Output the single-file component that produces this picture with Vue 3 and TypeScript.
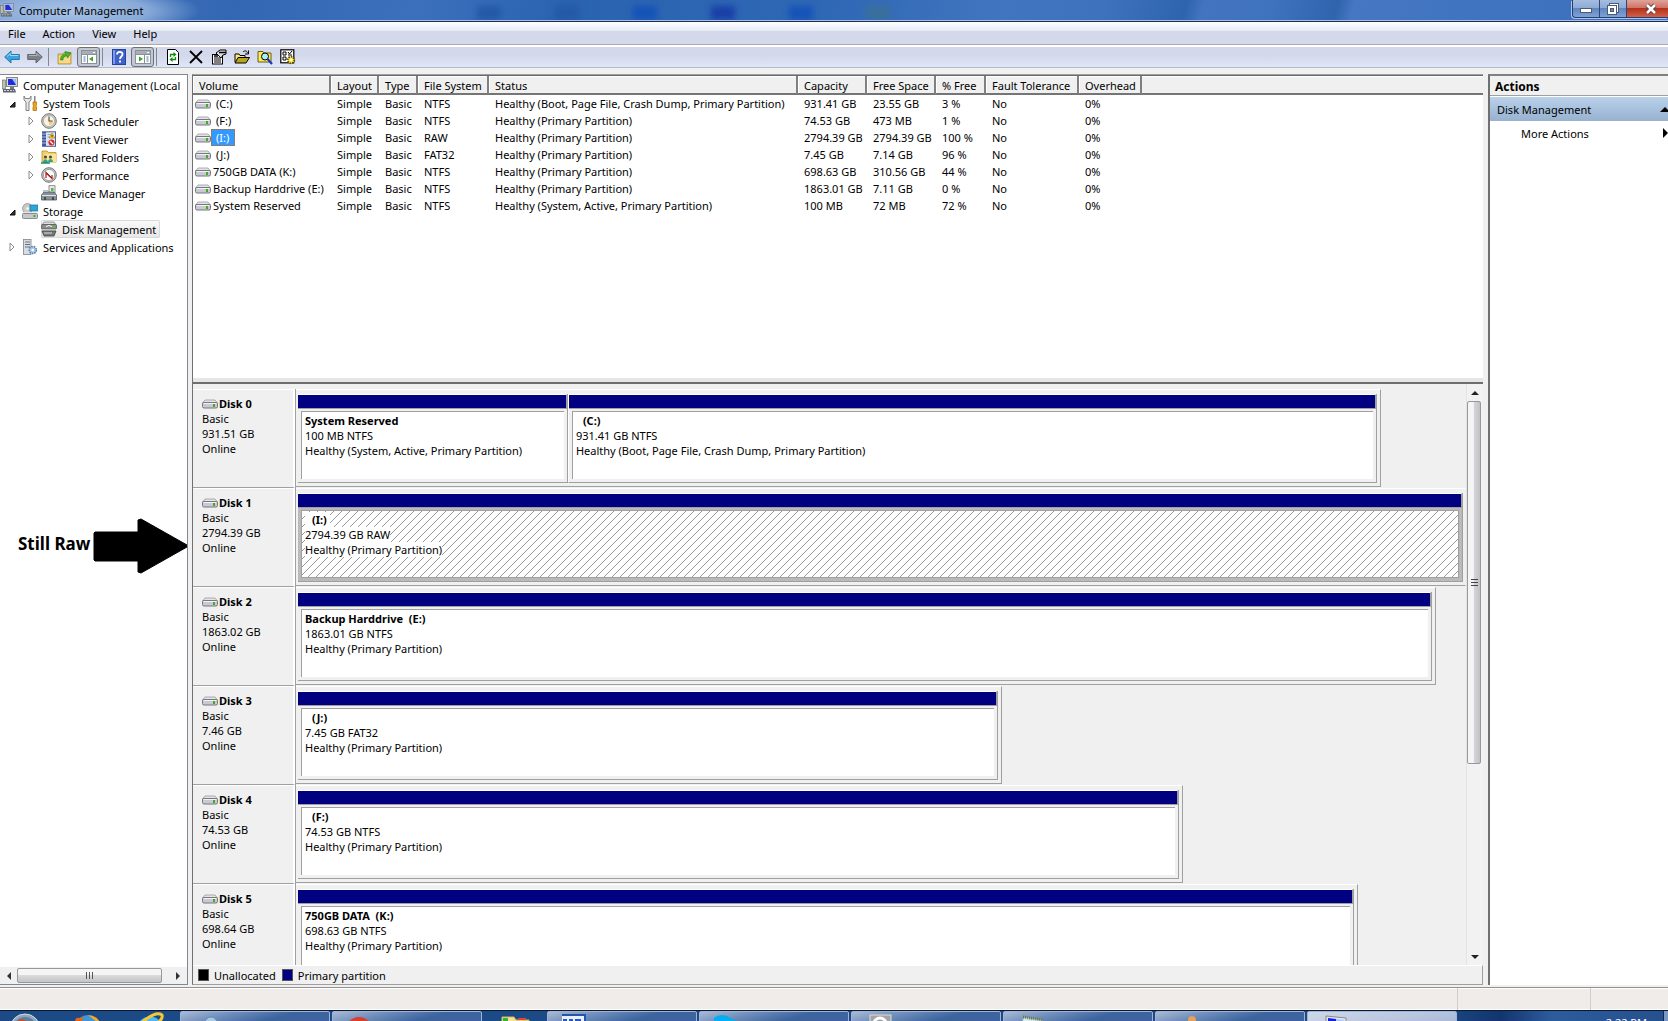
<script setup lang="ts">
interface Volume {
  name: string
  unnamed?: boolean
  selected?: boolean
  cells: string[]
}
interface Partition {
  name: string
  unnamed?: boolean
  info: string
  status: string
  share: number
  selected?: boolean
}
interface Disk {
  name: string
  size: string
  width: number
  partitions: Partition[]
}
interface TreeNode {
  label: string
  icon: string
  level: number
  arrow?: 'open' | 'closed'
  current?: boolean
}

const icons: Record<string, string> = {
  drive:
    '<path d="M3 4h10l2.500 3H.5z" fill="#e4e4e8" stroke="#9a9aa0" stroke-width=".8"/><rect x=".5" y="6.500" width="15" height="5.500" rx="1.500" fill="#c9c9d2" stroke="#77777f"/><path d="M1.500 7.500h13" stroke="#f4f4f8"/><rect x="11" y="8" width="2" height="3" fill="#3fae1e"/>',
  computer:
    '<rect x="4.500" y=".5" width="11" height="9" fill="#d8d8d8" stroke="#888"/><rect x="6" y="2" width="8" height="6" fill="#1c2fd8"/><path d="M10 2h4v6z" fill="#9db8ff"/><path d="M8 10h4v2H8z" fill="#777"/><rect x=".5" y="3" width="3" height="9" fill="#b9c4ae" stroke="#777" stroke-width=".7"/><path d="M1 12h12l1 3.500H1z" fill="#5d6670"/><path d="M2 13.500h10" stroke="#cfd6dc" stroke-dasharray="2 1"/>',
  tools:
    '<path d="M2 1v4l2 2v8.500h3V7l2-2V1L7.500 3.500h-4z" fill="#e6e6e6" stroke="#777" stroke-width=".9"/><path d="M12 1h1.500v6H12z" fill="#888"/><path d="M11 7h3.500v3l-.7 1 .7 1v3.500H11V12l.7-1-.7-1z" fill="#f0a31c" stroke="#a86a06" stroke-width=".7"/>',
  clock:
    '<circle cx="8" cy="8" r="7.300" fill="#c8c8c8" stroke="#777"/><circle cx="8" cy="8" r="5.500" fill="#fbf3dc" stroke="#999" stroke-width=".6"/><path d="M8 8h4a4 4 0 0 1-4 4z" fill="#f4cc7c"/><path d="M8 3.500V8h3.500" fill="none" stroke="#555" stroke-width="1.200"/>',
  event:
    '<rect x="1.500" y=".8" width="13" height="14.500" fill="#dbe4f2" stroke="#4a5f95"/><rect x="2" y="1" width="3" height="14" fill="#3d55a0"/><path d="M1 3h4M1 6h4M1 9h4M1 12h4" stroke="#d0d8ee" stroke-width=".8"/><path d="M6.500 3.500h3M6.500 6h2M6.500 11h2" stroke="#8fa2c8"/><path d="M11 2l3 5H8z" fill="#ffcf22" stroke="#a87a00" stroke-width=".6"/><path d="M11 4v1.800" stroke="#222"/><circle cx="10.500" cy="11.500" r="3" fill="#d62a2a"/><path d="M9 10l3 3" stroke="#fff" stroke-width="1.200"/>',
  shared:
    '<path d="M1 2h5l1.500 1.500H15V13H1z" fill="#f2cf6c" stroke="#b98f2a" stroke-width=".8"/><path d="M4 5h11v8H4z" fill="#ffe391"/><circle cx="4.500" cy="8" r="1.600" fill="#4a4a4a"/><circle cx="9.500" cy="8" r="1.600" fill="#4a4a4a"/><path d="M2 14c0-5 5-5 5 0zM7 13c0-4 5-4 5 0z" fill="#35a08c"/><path d="M0 14h9" stroke="#1d8d73" stroke-width="1.500"/>',
  performance:
    '<circle cx="8" cy="8" r="7.300" fill="#c6c6c6" stroke="#777"/><circle cx="8" cy="8" r="5.600" fill="#fff" stroke="#888" stroke-width=".7"/><path d="M5 11V6l6 5.500V8" fill="none" stroke="#d11f1f" stroke-width="1.300"/><path d="M4.500 4.500L11 11" stroke="#333" stroke-width=".8"/>',
  device:
    '<rect x="8" y=".7" width="6" height="7" fill="#e7edf0" stroke="#777" stroke-width=".8"/><rect x="10" y="3" width="2.500" height="3" fill="#58b536"/><path d="M3 7h10l2.500 3v5H.5v-5z" fill="#8a9299" stroke="#50565c" stroke-width=".8"/><path d="M1 10.500h14" stroke="#dfe5ea"/><path d="M4 12v3M12 12v3" stroke="#34383c" stroke-width="1.500"/><path d="M2 5h5v2H2z" fill="#b9c1c7"/>',
  storage:
    '<circle cx="5.500" cy="5.500" r="5" fill="#c9c9cc" stroke="#888" stroke-width=".7"/><circle cx="5.500" cy="5.500" r="1.300" fill="#fff"/><rect x="8" y="2" width="8" height="6" fill="#29a7d8" stroke="#1f6f90" stroke-width=".7"/><path d="M1.500 9h12L15.500 11H0z" fill="#e8e8ea"/><rect x=".5" y="10.500" width="15" height="5" rx="1" fill="#c5c7cc" stroke="#777" stroke-width=".8"/><rect x="11.500" y="12" width="2" height="2" fill="#33b41d"/>',
  disks:
    '<path d="M3 1h10l2 3H1z" fill="#dcdcdc" stroke="#777" stroke-width=".7"/><rect x=".5" y="3.500" width="15" height="4.500" rx="1" fill="#8b8b8b" stroke="#555" stroke-width=".8"/><rect x="11.500" y="5" width="2" height="2" fill="#4bd32c"/><path d="M5 5.500l3-1 3 1" fill="none" stroke="#fff"/><path d="M2 8.500h12l1.500 2H.5z" fill="#d6d6d6"/><path d="M1 10h14l-2 5H3z" fill="#777" stroke="#444" stroke-width=".8"/><path d="M3 12h8" stroke="#ddd"/>',
  services:
    '<rect x="1.500" y=".5" width="7.500" height="15" fill="#d7dde2" stroke="#7c868e" stroke-width=".8"/><path d="M3 3h5M3 5.500h5M3 8h5" stroke="#68747d"/><circle cx="10.800" cy="11" r="3.600" fill="#a9c6e6" stroke="#4f7fae" stroke-dasharray="1.500 1" stroke-width="1.500"/><circle cx="10.800" cy="11" r="1.300" fill="#fff"/>',
  back: '<path d="M.7 8L7 2v3.500h8.300v5H7V14z" fill="#38a5e0" stroke="#1b6ea8" stroke-width=".9"/><path d="M3 7.500L6.300 4.500v2h8" fill="none" stroke="#9fdcf8"/>',
  forward: '<path d="M15.300 8L9 2v3.500H.7v5H9V14z" fill="#7d8084" stroke="#5c5f63" stroke-width=".9"/><path d="M2 6.500h8v-2l3 3" fill="none" stroke="#b4b7ba"/>',
  up: '<path d="M1 5h5l1-1.500h7V15H1z" fill="#f0c766" stroke="#b58a35" stroke-width=".8"/><path d="M2 7h11v7H2z" fill="#f7d98a"/><path d="M3.500 11c0-4 2-5.500 5-6l-.5-2.500L14 4l-3.500 5-.8-2.300C7 7.500 6 8.500 6 11z" fill="#47b52f" stroke="#267a18" stroke-width=".6"/>',
  paneLeft: '<rect x=".5" y="1.500" width="15" height="13" fill="#fff" stroke="#8b8f96"/><path d="M1 2h14v3H1z" fill="#a9adb5"/><path d="M12 3.500h2" stroke="#fff"/><path d="M1 5.500h14M6.500 5.500v9" stroke="#8b8f96"/><path d="M2.500 8h2M2.500 10h2M2.500 12h2" stroke="#4570c0"/><path d="M12 7.500v5l-4-2.500z" fill="#35a61f"/>',
  paneRight: '<rect x=".5" y="1.500" width="15" height="13" fill="#fff" stroke="#8b8f96"/><path d="M1 2h14v3H1z" fill="#a9adb5"/><path d="M12 3.500h2" stroke="#fff"/><path d="M1 5.500h14M9.500 5.500v9" stroke="#8b8f96"/><path d="M11.500 8h2M11.500 10h2M11.500 12h2" stroke="#4570c0"/><path d="M4 7.500v5l4-2.500z" fill="#35a61f"/>',
  help: '<rect x="1.500" y=".5" width="13" height="15" fill="#3f62c8" stroke="#2743a0"/><path d="M2 1h2v14H2z" fill="#7f9ae6"/><path d="M6 5.500C6 2 11.500 2 11.500 5.300 11.500 7.500 9 7.500 9 10" fill="none" stroke="#fff" stroke-width="1.800"/><rect x="8" y="11.500" width="2" height="2" fill="#fff"/>',
  refresh: '<path d="M2.500.5h8l3 3v12h-11z" fill="#fff" stroke="#000"/><path d="M5.500 8V5.500h4M10.500 8v2.500h-4" fill="none" stroke="#118a11" stroke-width="1.300"/><path d="M8.500 3l3 2.500-3 2.500zM7.500 8l-3 2.500 3 2.500z" fill="#118a11"/>',
  remove: '<path d="M2 2l12 12M14 2L2 14" stroke="#000" stroke-width="1.800"/>',
  properties: '<rect x="1.500" y="5.500" width="10" height="9.500" fill="#fff" stroke="#000"/><path d="M3 9h7M3 11h7M3 13h7" stroke="#000"/><path d="M5 4l4-3h6v4l-3 1-2 3-3-3z" fill="#ddd" stroke="#000"/><path d="M8 3.500h7M3 7h4" stroke="#000" stroke-width="1.300"/>',
  open: '<path d="M1 13V5h4l1 1.500h5V8" fill="#ffe97a" stroke="#000"/><path d="M1 14l3-5.500h11.500L12 14z" fill="#b8a51c" stroke="#000"/><path d="M9 3c2-2 4-1 4.500 1M14.500 1.500V5H11" fill="none" stroke="#000"/>',
  find: '<path d="M1 13V2.500h5l1 1.500h7v9z" fill="#ffe75a" stroke="#6a5f10"/><circle cx="8" cy="7.500" r="3.500" fill="#a5f0f2" stroke="#000"/><path d="M10.500 10l4.500 5" stroke="#1a37c0" stroke-width="2.200"/>',
  settings: '<rect x=".8" y=".8" width="13" height="13" fill="#fff" stroke="#000" stroke-width="1.200"/><path d="M3 3h3v3H3zM3 8h3v3H3z" fill="none" stroke="#000"/><path d="M8 3l1.500 2L12 2M8 6h4" fill="none" stroke="#000"/><circle cx="11" cy="11" r="3.300" fill="#ffe23c" stroke="#5c5000" stroke-width="1.800" stroke-dasharray="1.500 1"/><circle cx="11" cy="11" r="1.300" fill="#fff"/>',
}

const menus = ['File', 'Action', 'View', 'Help']
const tools: { icon: string; label: string; pressed?: boolean; sep?: boolean }[] = [
  { icon: 'back', label: 'Back' },
  { icon: 'forward', label: 'Forward', sep: true },
  { icon: 'up', label: 'Up one level' },
  { icon: 'paneLeft', label: 'Show or hide console tree', pressed: true, sep: true },
  { icon: 'help', label: 'Help' },
  { icon: 'paneRight', label: 'Show or hide action pane', pressed: true, sep: true },
  { icon: 'refresh', label: 'Refresh' },
  { icon: 'remove', label: 'Delete' },
  { icon: 'properties', label: 'Properties' },
  { icon: 'open', label: 'Open' },
  { icon: 'find', label: 'Explore' },
  { icon: 'settings', label: 'Settings' },
]

const tree: TreeNode[] = [
  { label: 'Computer Management (Local', icon: 'computer', level: 0 },
  { label: 'System Tools', icon: 'tools', level: 1, arrow: 'open' },
  { label: 'Task Scheduler', icon: 'clock', level: 2, arrow: 'closed' },
  { label: 'Event Viewer', icon: 'event', level: 2, arrow: 'closed' },
  { label: 'Shared Folders', icon: 'shared', level: 2, arrow: 'closed' },
  { label: 'Performance', icon: 'performance', level: 2, arrow: 'closed' },
  { label: 'Device Manager', icon: 'device', level: 2 },
  { label: 'Storage', icon: 'storage', level: 1, arrow: 'open' },
  { label: 'Disk Management', icon: 'disks', level: 2, current: true },
  { label: 'Services and Applications', icon: 'services', level: 1, arrow: 'closed' },
]

const columns = [
  { label: 'Volume', width: 138 },
  { label: 'Layout', width: 48 },
  { label: 'Type', width: 39 },
  { label: 'File System', width: 71 },
  { label: 'Status', width: 309 },
  { label: 'Capacity', width: 69 },
  { label: 'Free Space', width: 69 },
  { label: '% Free', width: 50 },
  { label: 'Fault Tolerance', width: 93 },
  { label: 'Overhead', width: 63 },
]

const volumes: Volume[] = [
  { name: '(C:)', unnamed: true, cells: ['Simple', 'Basic', 'NTFS', 'Healthy (Boot, Page File, Crash Dump, Primary Partition)', '931.41 GB', '23.55 GB', '3 %', 'No', '0%'] },
  { name: '(F:)', unnamed: true, cells: ['Simple', 'Basic', 'NTFS', 'Healthy (Primary Partition)', '74.53 GB', '473 MB', '1 %', 'No', '0%'] },
  { name: '(I:)', unnamed: true, selected: true, cells: ['Simple', 'Basic', 'RAW', 'Healthy (Primary Partition)', '2794.39 GB', '2794.39 GB', '100 %', 'No', '0%'] },
  { name: '(J:)', unnamed: true, cells: ['Simple', 'Basic', 'FAT32', 'Healthy (Primary Partition)', '7.45 GB', '7.14 GB', '96 %', 'No', '0%'] },
  { name: '750GB DATA (K:)', cells: ['Simple', 'Basic', 'NTFS', 'Healthy (Primary Partition)', '698.63 GB', '310.56 GB', '44 %', 'No', '0%'] },
  { name: 'Backup Harddrive (E:)', cells: ['Simple', 'Basic', 'NTFS', 'Healthy (Primary Partition)', '1863.01 GB', '7.11 GB', '0 %', 'No', '0%'] },
  { name: 'System Reserved', cells: ['Simple', 'Basic', 'NTFS', 'Healthy (System, Active, Primary Partition)', '100 MB', '72 MB', '72 %', 'No', '0%'] },
]

const disks: Disk[] = [
  {
    name: 'Disk 0', size: '931.51 GB', width: 92.7,
    partitions: [
      { name: 'System Reserved', info: '100 MB NTFS', status: 'Healthy (System, Active, Primary Partition)', share: 25 },
      { name: '(C:)', unnamed: true, info: '931.41 GB NTFS', status: 'Healthy (Boot, Page File, Crash Dump, Primary Partition)', share: 75 },
    ],
  },
  { name: 'Disk 1', size: '2794.39 GB', width: 100, partitions: [{ name: '(I:)', unnamed: true, info: '2794.39 GB RAW', status: 'Healthy (Primary Partition)', share: 100, selected: true }] },
  { name: 'Disk 2', size: '1863.02 GB', width: 97.4, partitions: [{ name: 'Backup Harddrive  (E:)', info: '1863.01 GB NTFS', status: 'Healthy (Primary Partition)', share: 100 }] },
  { name: 'Disk 3', size: '7.46 GB', width: 60.3, partitions: [{ name: '(J:)', unnamed: true, info: '7.45 GB FAT32', status: 'Healthy (Primary Partition)', share: 100 }] },
  { name: 'Disk 4', size: '74.53 GB', width: 75.8, partitions: [{ name: '(F:)', unnamed: true, info: '74.53 GB NTFS', status: 'Healthy (Primary Partition)', share: 100 }] },
  { name: 'Disk 5', size: '698.64 GB', width: 90.8, partitions: [{ name: '750GB DATA  (K:)', info: '698.63 GB NTFS', status: 'Healthy (Primary Partition)', share: 100 }] },
]
</script>

<template>
  <div class="screen">
    <header class="titlebar">
      <svg class="ico" viewBox="0 0 16 16" v-html="icons.computer"></svg>
      <h1>Computer Management</h1>
      <div class="smudges"><i class="faint"></i><i class="faint"></i><i></i><i class="indigo"></i><i></i><i class="teal"></i></div>
      <div class="winbtns">
        <button type="button" aria-label="Minimize">
          <svg width="14" height="14" viewBox="0 0 14 14"><rect x="1.500" y="6.500" width="11" height="4" fill="#fff" stroke="#4b5a75" /></svg>
        </button>
        <button type="button" aria-label="Restore">
          <svg width="14" height="14" viewBox="0 0 14 14">
            <rect x="3.500" y="1.500" width="9" height="9" fill="#fff" stroke="#4b5a75" />
            <rect x="1.500" y="3.500" width="9" height="9" fill="#fff" stroke="#4b5a75" />
            <rect x="4.500" y="6.500" width="3" height="3" fill="#6f8bbd" stroke="#4b5a75" />
          </svg>
        </button>
        <button type="button" class="close" aria-label="Close">
          <svg width="14" height="14" viewBox="0 0 14 14">
            <path d="M3 3l8 8M11 3l-8 8" stroke="#5b3a40" stroke-width="4.500" />
            <path d="M3 3l8 8M11 3l-8 8" stroke="#fff" stroke-width="2.500" />
          </svg>
        </button>
      </div>
    </header>

    <nav class="menubar" aria-label="Menu">
      <button v-for="m in menus" :key="m" type="button">{{ m }}</button>
    </nav>

    <div class="toolbar" role="toolbar" aria-label="Tools">
      <template v-for="t in tools" :key="t.icon">
        <button type="button" :class="{ pressed: t.pressed }" :aria-label="t.label">
          <svg class="ico" viewBox="0 0 16 16" v-html="icons[t.icon]"></svg>
        </button>
        <span v-if="t.sep" class="sep"></span>
      </template>
    </div>

    <main class="panes">
      <section class="treepane">
        <ul class="tree">
          <li v-for="n in tree" :key="n.label" :class="'lv' + n.level">
            <svg v-if="n.level > 0" class="twist" viewBox="0 0 12 12">
              <path v-if="n.arrow === 'open'" d="M9 5v5H4z" fill="#333" stroke="#111" />
              <path v-else-if="n.arrow === 'closed'" d="M4 2l4 4-4 4z" fill="#fff" stroke="#8a8a8a" />
            </svg>
            <a href="#" :class="{ current: n.current }">
              <svg class="ico" viewBox="0 0 16 16" v-html="icons[n.icon]"></svg>
              <span>{{ n.label }}</span>
            </a>
          </li>
        </ul>
        <div class="note">
          <strong>Still Raw</strong>
          <svg width="96" height="58" viewBox="0 0 96 58">
            <path d="M2 15h43V3l3-1 46 26q1 1 0 2L48 56l-3-1V44H2l-1-1V16z" fill="#000" stroke="#000" stroke-linejoin="round" />
          </svg>
        </div>
        <div class="hscroll">
          <button type="button" aria-label="Scroll left"><svg width="6" height="8" viewBox="0 0 6 8"><path d="M5 0v8L1 4z" fill="#333" /></svg></button>
          <div class="hthumb"><i></i><i></i><i></i></div>
          <button type="button" aria-label="Scroll right"><svg width="6" height="8" viewBox="0 0 6 8"><path d="M1 0v8l4-4z" fill="#333" /></svg></button>
        </div>
      </section>

      <section class="center">
        <div class="volumes">
          <table>
            <colgroup>
              <col v-for="c in columns" :key="c.label" :style="{ width: c.width + 'px' }" />
              <col />
            </colgroup>
            <thead>
              <tr>
                <th v-for="c in columns" :key="c.label" scope="col">{{ c.label }}</th>
                <td class="filler"></td>
              </tr>
            </thead>
            <tbody>
              <tr v-for="v in volumes" :key="v.name">
                <td class="vol">
                  <div class="volname">
                    <svg class="ico" viewBox="0 0 16 16" v-html="icons.drive"></svg>
                    <span :class="{ unnamed: v.unnamed, selected: v.selected }">{{ v.name }}</span>
                  </div>
                </td>
                <td v-for="(c, i) in v.cells" :key="i">{{ c }}</td>
                <td></td>
              </tr>
            </tbody>
          </table>
        </div>

        <div class="diskarea">
          <div class="disks">
            <article v-for="d in disks" :key="d.name" class="disk">
              <div class="dlabel">
                <h2><svg class="ico" viewBox="0 0 16 16" v-html="icons.drive"></svg>{{ d.name }}</h2>
                <p>Basic</p>
                <p>{{ d.size }}</p>
                <p>Online</p>
              </div>
              <div class="track">
                <div class="frame" :class="{ full: d.width === 100 }" :style="{ width: d.width + '%' }">
                  <div v-for="p in d.partitions" :key="p.name" class="part" :class="{ picked: p.selected }" :style="{ flexGrow: p.share }">
                    <div class="bar"></div>
                    <div class="rim">
                      <div class="box">
                        <svg v-if="p.selected" class="hatch" width="100%" height="100%" aria-hidden="true">
                          <defs>
                            <pattern id="hatch" width="8" height="8" patternUnits="userSpaceOnUse">
                              <path d="M7 0h1v1h-1zM6 1h1v1h-1zM5 2h1v1h-1zM4 3h1v1h-1zM3 4h1v1h-1zM2 5h1v1h-1zM1 6h1v1h-1zM0 7h1v1h-1z" fill="#999" />
                            </pattern>
                          </defs>
                          <rect width="100%" height="100%" fill="url(#hatch)" />
                        </svg>
                        <p><b :class="{ unnamed: p.unnamed }">{{ p.name }}</b></p>
                        <p><span>{{ p.info }}</span></p>
                        <p><span>{{ p.status }}</span></p>
                      </div>
                    </div>
                  </div>
                </div>
              </div>
            </article>
          </div>
          <div class="vscroll">
            <button type="button" aria-label="Scroll up"><svg width="8" height="4" viewBox="0 0 8 4"><path d="M0 4h8L4 0z" fill="#222" /></svg></button>
            <div class="vthumb"><i></i><i></i><i></i></div>
            <button type="button" aria-label="Scroll down"><svg width="8" height="4" viewBox="0 0 8 4"><path d="M0 0h8L4 4z" fill="#222" /></svg></button>
          </div>
        </div>

        <footer class="legend">
          <span><i class="black"></i>Unallocated</span>
          <span><i class="navy"></i>Primary partition</span>
        </footer>
      </section>

      <aside class="actions">
        <h2>Actions</h2>
        <button type="button" class="group">Disk Management
          <svg width="8" height="5" viewBox="0 0 8 5"><path d="M0 5h10L5 0z" /></svg>
        </button>
        <button type="button" class="more">More Actions
          <svg width="5" height="10" viewBox="0 0 5 10"><path d="M0 0v10l5-5z" /></svg>
        </button>
      </aside>
    </main>

    <div class="statusbar"><span></span><span></span><span></span></div>

    <footer class="taskbar">
      <div class="launch">
        <svg width="32" height="32" viewBox="0 0 32 32"><circle cx="16" cy="17" r="15" fill="#8fa6b8" stroke="#d5e0e8" /><circle cx="16" cy="17" r="12" fill="#5e7f9c" /><path d="M8 9q4-3 8-1v8H8z" fill="#d8452a" /></svg>
        <svg width="28" height="32" viewBox="0 0 28 32"><circle cx="14" cy="16" r="13" fill="#3f97d6" /><path d="M1 16Q0 4 5 6l5-1-3 5z" fill="#e8641b" /><path d="M14 3q12 1 13 12l-4-5z" fill="#f6a821" /></svg>
        <svg width="30" height="32" viewBox="0 0 30 32"><circle cx="15" cy="18" r="11" fill="none" stroke="#4fb8ee" stroke-width="5" /><path d="M3 14Q20-2 27 3q1 3-3 7" fill="none" stroke="#f3c832" stroke-width="3" /></svg>
      </div>
      <div class="task"><svg width="32" height="32" viewBox="0 0 32 32"><circle cx="16" cy="10" r="6" fill="#a7c9e6" stroke="#5d8cb8" /><circle cx="7" cy="13" r="4" fill="#4f9c68" /></svg></div>
      <div class="task"><svg width="32" height="32" viewBox="0 0 32 32"><circle cx="12" cy="17" r="13" fill="#dd3b30" /></svg></div>
      <div class="folder"><svg width="32" height="32" viewBox="0 0 32 32"><path d="M2 5h12l2 3h13v22H2z" fill="#f5e19a" stroke="#d3b658" /><path d="M3 6h5v3H3z" fill="#2fb52f" /><path d="M18 7h8" stroke="#d6483a" stroke-width="2" /></svg></div>
      <div class="task"><svg width="32" height="32" viewBox="0 0 32 32"><rect x="-3" y="2" width="26" height="28" fill="#e8f0fc" stroke="#2454b0" stroke-width="2" /><path d="M1 6h4v16H1zM7 6h4v16H7zM13 6h6v18h-6z" fill="#1d5cc8" /></svg></div>
      <div class="task"><svg width="32" height="32" viewBox="0 0 32 32"><circle cx="8" cy="14" r="12" fill="#00aff0" /><circle cx="14" cy="17" r="12" fill="#00aff0" /></svg></div>
      <div class="task"><svg width="32" height="32" viewBox="0 0 32 32"><rect x="4" y="2" width="21" height="28" fill="#a3a3a3" stroke="#ddd" /><circle cx="14" cy="11" r="6" fill="none" stroke="#fff" stroke-width="3" /></svg></div>
      <div class="task"><svg width="32" height="32" viewBox="0 0 32 32"><path d="M5 4l19 3-3 23H2z" fill="#d7eef0" stroke="#8aa" /><path d="M5 4l19 3" stroke="#6b7750" stroke-width="3" stroke-dasharray="1 1" /></svg></div>
      <div class="task"><svg width="32" height="32" viewBox="0 0 32 32"><circle cx="22" cy="7" r="4" fill="#e0a25c" /><path d="M4 14q8-8 14-5l-4 12z" fill="#3db4d8" /></svg></div>
      <div class="task active"><svg width="32" height="32" viewBox="0 0 32 32"><path d="M4 3l20 2v20H4z" fill="#dfe6f3" stroke="#888" /><path d="M6 5l8 1v16H6z" fill="#1420dc" /><path d="M14 6l8 1v15h-8z" fill="#b4c4ff" /></svg></div>
      <time>2:22 PM</time>
      <span class="peek"></span>
    </footer>
  </div>
</template>

<style>
html,
body {
  background: #f0f0f0;
}
</style>

<style scoped>
.screen {
  display: flex;
  flex-direction: column;
  height: 100vh;
  overflow: hidden;
  background: #f0f0f0;
  color: #000;
  font: 11px/15px 'Noto Sans', 'Open Sans', sans-serif;
}
h1,
h2,
p,
ul {
  margin: 0;
  padding: 0;
  font-size: inherit;
}
button {
  margin: 0;
  padding: 0;
  border: 0;
  background: none;
  color: inherit;
  font: inherit;
}
a {
  color: inherit;
  text-decoration: none;
}
.ico {
  width: 16px;
  height: 16px;
  flex: none;
}

/* title bar */
.titlebar {
  position: relative;
  flex: none;
  display: flex;
  align-items: center;
  height: 20px;
  border-bottom: 1px solid #a9bfe2;
  box-shadow: 0 1px #1b2f55;
  margin-bottom: 1px;
  background:
    radial-gradient(ellipse 130px 26px at 70px 11px, #a9c3e6 0, #9ab8e0cc 60%, transparent 100%),
    linear-gradient(105deg, #4c7cc4 0, #3367b3 14%, #3c70bd 25%, #2a63b0 34%, #2f68b5 50%, #4275bf 60%, #3f72bd 66%, #2e64ae 71%, #4274bf 72%, #4073be 76%, #3064ad 80%, #4577c2 81%, #3a6fbd 100%);
}
.titlebar .ico {
  width: 14px;
  height: 14px;
}
.titlebar h1 {
  margin-left: 5px;
  font-weight: 400;
}
.smudges {
  position: absolute;
  left: 27%;
  top: 0;
  width: 28%;
  height: 20px;
  overflow: hidden;
  display: flex;
  justify-content: space-around;
  align-items: flex-end;
}
.smudges i {
  width: 24px;
  height: 14px;
  background: #1553b8;
  filter: blur(3px);
}
.smudges .faint {
  background: #2459a6;
}
.smudges .indigo {
  background: #1a3fa8;
}
.smudges .teal {
  background: #3a6f9c;
}
.winbtns {
  align-self: flex-start;
  display: flex;
  height: 17px;
  margin-left: auto;
  border: 1px solid #26406c;
  border-width: 0 0 1px 1px;
  border-radius: 0 0 0 4px;
  box-shadow: -1px 1px #a9c3ea;
  overflow: hidden;
}
.winbtns button {
  display: grid;
  place-items: center;
  width: 27px;
  border-right: 1px solid #2c4775;
  background: linear-gradient(#a5bde0 0, #8eabd6 45%, #5f86c0 50%, #7fa2d6 100%);
}
.winbtns .close {
  width: 41px;
  padding-left: 6px;
  border-right: 0;
  background: linear-gradient(#dfa39a 0, #cf7466 45%, #b53219 50%, #d1604a 100%);
}

/* menu and tool bars */
.menubar {
  flex: none;
  display: flex;
  gap: 17px;
  height: 22px;
  padding-left: 8px;
  background: linear-gradient(#fff 0, #e4eaf5 9px, #d3d8eb 9px);
  border-bottom: 1px solid #a9aba6;
}
.toolbar {
  flex: none;
  display: flex;
  align-items: center;
  height: 20px;
  border-top: 2px solid #fff;
  border-bottom: 1px solid #b2bacb;
  background: linear-gradient(#d3d8ea 40%, #dfe6f6);
}
.toolbar button {
  display: grid;
  place-items: center;
  width: 23px;
  height: 20px;
}
.toolbar .pressed {
  margin-left: 1px;
  border: 1px solid #6d717c;
  border-radius: 3px;
  background: #c3c7d4;
}
.toolbar .sep {
  width: 1px;
  height: 18px;
  margin: 0 4px 0 2px;
  background: #85888f;
}

/* panes */
.panes {
  flex: 1;
  min-height: 0;
  display: grid;
  grid-template-columns: 188px minmax(0, 1fr) 180px;
  padding: 6px 0 2px;
}
.treepane {
  position: relative;
  display: flex;
  flex-direction: column;
  justify-content: space-between;
  min-height: 0;
  border: solid #828790;
  border-width: 1px 1px 1px 0;
  background: #fff;
  overflow: hidden;
}
.tree {
  padding-top: 1px;
  list-style: none;
}
.tree li {
  display: flex;
  align-items: center;
  height: 18px;
  white-space: nowrap;
}
.tree .lv0 {
  padding-left: 2px;
}
.tree .lv1 {
  padding-left: 6px;
}
.tree .lv2 {
  padding-left: 25px;
}
.twist {
  flex: none;
  width: 12px;
  height: 12px;
  margin-right: 4px;
}
.tree a {
  display: flex;
  align-items: center;
  gap: 5px;
  height: 18px;
  padding-right: 4px;
}
.tree .current {
  border-radius: 2px;
  box-shadow: inset 0 0 0 1px #d9d9d9;
  background: linear-gradient(#fafafa, #e6e6e6);
}
.note {
  position: absolute;
  left: 18px;
  top: 442px;
  display: flex;
  align-items: center;
  gap: 3px;
  white-space: nowrap;
  font-size: 17px;
}
.note strong {
  padding-bottom: 6px;
}
.hscroll {
  display: flex;
  align-items: center;
  height: 17px;
  padding-right: 1px;
  background: #f0f0f0;
}
.hscroll button {
  width: 17px;
  height: 17px;
}
.hthumb {
  flex: 0 1 143px;
  display: flex;
  justify-content: center;
  align-items: center;
  gap: 2px;
  height: 13px;
  margin-right: auto;
  border: 1px solid #989898;
  border-radius: 2px;
  background: linear-gradient(#f5f5f5 45%, #dadadd 50%, #c4c4c8);
}
.hthumb i {
  width: 1px;
  height: 7px;
  background: #555;
}

.center {
  display: flex;
  flex-direction: column;
  min-height: 0;
  margin: 0 5px 0 4px;
  border-left: 1px solid #707070;
  border-top: 1px solid #a0a0a0;
  border-bottom: 1px solid #a0a0a0;
}
.volumes {
  flex: none;
  height: 306px;
  border-top: 1px solid #696969;
  background: #fff;
  border-bottom: 2px solid #6e6e6e;
  box-shadow: inset 0 -4px #e6e6e6;
}
table {
  width: 100%;
  table-layout: fixed;
  border-collapse: separate;
  border-spacing: 0;
}
th,
td {
  height: 17px;
  padding: 0 0 0 6px;
  font-weight: 400;
  text-align: left;
  white-space: nowrap;
}
thead th,
.filler {
  box-sizing: border-box;
  height: 19px;
  background: #f0f0f0;
  border-bottom: 2px solid #757575;
  box-shadow: inset 0 1px #fff;
}
thead th {
  padding-top: 2px;
  border-right: 2px solid #808080;
  box-shadow: inset 1px 1px #fff;
}
tbody td.vol {
  padding-left: 2px;
}
.volname {
  display: flex;
  align-items: center;
}
.volname span {
  height: 17px;
  padding: 0 2px;
  line-height: 17px;
}
.volname .unnamed {
  padding: 0 6px 0 5px;
}
.volname .selected {
  background: #3399ff;
  color: #fff;
  outline: 1px dotted #cc6600;
  outline-offset: -1px;
}

/* graphical disk view */
.diskarea {
  flex: 1;
  min-height: 0;
  display: flex;
  overflow: hidden;
}
.disks {
  flex: 1;
  min-width: 0;
  padding-top: 5px;
}
.disk {
  display: flex;
  height: 99px;
}
.dlabel {
  box-sizing: border-box;
  flex: none;
  width: 102px;
  height: 99px;
  padding: 6px 0 0 9px;
  border-top: 1px solid #fff;
  border-right: 2px solid #fff;
  border-bottom: 1px solid #a0a0a0;
}
.dlabel h2 {
  display: flex;
  align-items: center;
  gap: 1px;
  height: 15px;
  font-weight: 700;
}
.track {
  box-sizing: border-box;
  flex: 1;
  min-width: 0;
  height: 99px;
  border-left: 1px solid #a0a0a0;
}
.frame {
  box-sizing: border-box;
  display: flex;
  height: 98px;
  padding: 4px 3px 3px 2px;
  border-top: 1px solid #fff;
  border-right: 1px solid #a0a0a0;
  border-bottom: 1px solid #a0a0a0;
}
.frame.full {
  padding-right: 2px;
  border-right-color: transparent;
}
.part {
  flex-basis: 0;
  min-width: 0;
  display: flex;
  flex-direction: column;
  border-right: 1px solid #a0a0a0;
  border-bottom: 1px solid #a0a0a0;
}
.bar {
  flex: none;
  height: 13px;
  border-top: 1px solid #fff;
  border-right: 1px solid #a0a0a0;
  border-bottom: 1px solid #a0a0a0;
  background: #000080;
}
.part + .part {
  border-left: 1px solid #fff;
}
.rim {
  flex: 1;
  display: flex;
  padding: 2px 3px 3px;
}
.box {
  position: relative;
  flex: 1;
  min-width: 0;
  padding: 1px 0 0 3px;
  border-left: 1px solid #a0a0a0;
  border-top: 1px solid #a0a0a0;
  background: #fff;
  white-space: nowrap;
}
.box p {
  position: relative;
  white-space: pre;
}
.picked .rim {
  background: #bababa;
}
.picked .box {
  border: 1px solid #a0a0a0;
}
.picked .box p > * {
  background: #fff;
}
.hatch {
  position: absolute;
  left: 0;
  top: 0;
}
.box .unnamed {
  padding: 0 3px 0 7px;
}

.vscroll {
  flex: none;
  display: flex;
  flex-direction: column;
  width: 17px;
  background: #f2f2f2;
  border-left: 1px solid #e4e4e4;
  box-sizing: border-box;
}
.vscroll button {
  flex: none;
  display: grid;
  place-items: center;
  height: 17px;
}
.vthumb {
  flex: 0 1 361px;
  display: flex;
  flex-direction: column;
  justify-content: center;
  align-items: center;
  gap: 2px;
  width: 12px;
  margin-bottom: auto;
  border: 1px solid #989898;
  border-radius: 2px;
  background: linear-gradient(90deg, #f5f5f5 45%, #d6d6da 50%, #c0c0c6);
}
.vthumb i {
  width: 7px;
  height: 1px;
  background: #444;
}
.legend {
  flex: none;
  display: flex;
  align-items: center;
  gap: 6px;
  height: 18px;
  padding-left: 5px;
  border-top: 1px solid #fff;
  border-right: 1px solid #a0a0a0;
}
.legend span {
  display: flex;
  align-items: center;
  gap: 5px;
}
.legend i {
  width: 9px;
  height: 10px;
  border: 1px solid #555;
  background: #000;
}
.legend .navy {
  background: #000080;
}

/* actions pane */
.actions {
  min-width: 0;
  border-left: 2px solid #707070;
  border-top: 2px solid #808080;
  background: #fff;
}
.actions h2 {
  height: 19px;
  padding-left: 5px;
  border-bottom: 1px solid #a0a0a0;
  background: #f0f0f0;
  font-size: 12px;
  line-height: 21px;
}
.actions button {
  display: flex;
  align-items: center;
  justify-content: space-between;
  width: 100%;
  height: 24px;
}
.actions .group {
  margin-top: 1px;
  padding-left: 7px;
  background: linear-gradient(#b9d1ea, #97b1d0);
}
.actions .more {
  padding-left: 31px;
}

.statusbar {
  flex: none;
  display: grid;
  grid-template-columns: minmax(0, 1fr) 133px 78px;
  height: 22px;
  border-top: 1px solid #909090;
  box-shadow: inset 0 1px #fff, inset 0 -1px #fff;
  background: #f0ecea;
}
.statusbar span + span {
  border-left: 1px solid #d0cccc;
}

/* the desktop taskbar runs off the bottom of the screen */
.taskbar {
  flex: none;
  display: flex;
  align-items: flex-start;
  height: 10px;
  overflow: hidden;
  border-top: 1px solid #0a1830;
  background: linear-gradient(90deg, #1c4a86 0, #1c4a86 86%, #12356e 90%, #2e5b9c 93%, #24508f 100%);
}
.launch {
  flex: 0 0 180px;
  display: flex;
  justify-content: space-between;
  box-sizing: border-box;
  padding: 1px 15px 0 9px;
}
.task {
  flex: 0 1 150px;
  box-sizing: border-box;
  height: 40px;
  margin-right: 2px;
  padding: 1px 0 0 14px;
  border: 1px solid #9fb4d4;
  border-radius: 2px;
  background: linear-gradient(165deg, #a9bad6 0, #6d8cba 20%, #3d649f 40%);
}
.task.active {
  background: linear-gradient(165deg, #cdd7e8 0, #b9c6df 40%, #8fa5cb 100%);
}
.folder {
  flex: 0 0 63px;
  display: flex;
  justify-content: center;
  padding-top: 1px;
}
.taskbar time {
  margin: 4px 16px 0 auto;
  color: #fff;
}
.peek {
  width: 4px;
  height: 40px;
  border-left: 1px solid #0d2a55;
  background: #7c99c4;
}
</style>
